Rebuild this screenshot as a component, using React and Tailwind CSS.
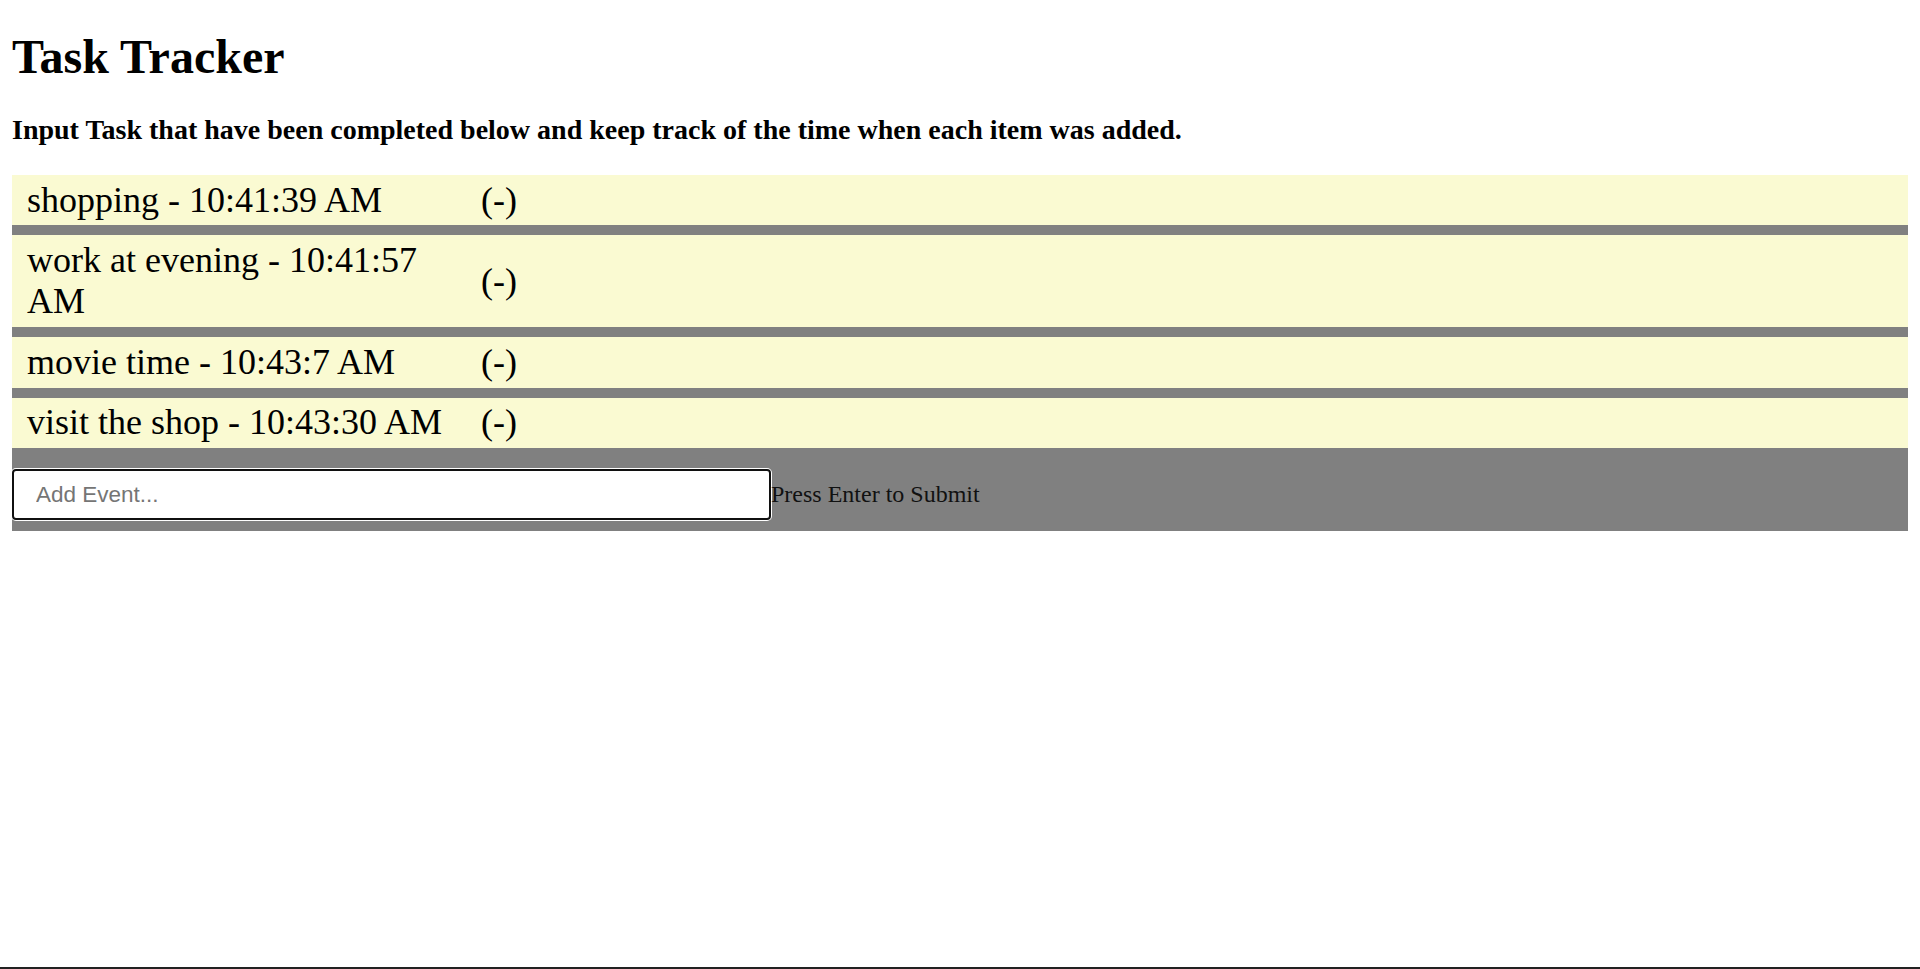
import { useState } from 'react';

const initialTasks = [
  { id: 1, text: 'shopping', time: '10:41:39 AM' },
  { id: 2, text: 'work at evening', time: '10:41:57 AM' },
  { id: 3, text: 'movie time', time: '10:43:7 AM' },
  { id: 4, text: 'visit the shop', time: '10:43:30 AM' },
];

const formatTime = (d) => {
  let h = d.getHours();
  const ampm = h >= 12 ? 'PM' : 'AM';
  h = h % 12 || 12;
  return `${h}:${d.getMinutes()}:${d.getSeconds()} ${ampm}`;
};

const App = () => {
  const [tasks, setTasks] = useState(initialTasks);
  const [value, setValue] = useState('');

  const handleSubmit = (e) => {
    e.preventDefault();
    if (!value.trim()) return;
    setTasks([...tasks, { id: Date.now(), text: value, time: formatTime(new Date()) }]);
    setValue('');
  };

  const removeTask = (id) => setTasks(tasks.filter(t => t.id !== id));

  return (
    <div className="h-screen border-b-2 border-[#222] px-3 bg-white text-black font-['Liberation_Serif','Times_New_Roman',serif] overflow-hidden">
      <h1 className="pt-[29px] text-[48px] leading-[55px] font-bold">Task Tracker</h1>
      <h3 className="mt-[30px] text-[28px] leading-[32px] font-bold">
        Input Task that have been completed below and keep track of the time when each item was added.
      </h3>

      <div className="mt-[29px] bg-[#808080]">
        <ul>
          {tasks.map(task => (
            <li key={task.id} className="mb-[10px] last:mb-0 flex items-center bg-[#fafad2] pl-[15px] py-[4.5px] text-[36px] leading-[41.4px]">
              <span className="w-[454px]">{task.text} - {task.time}</span>
              <span className="cursor-pointer" onClick={() => removeTask(task.id)}>(-)</span>
            </li>
          ))}
        </ul>
        <form onSubmit={handleSubmit} className="flex items-center pt-[21px] pb-[11px]">
          <input
            type="text"
            value={value}
            onChange={e => setValue(e.target.value)}
            placeholder="Add Event..."
            className="w-[759px] h-[51px] bg-white border-2 border-[#101010] rounded-[4px] shadow-[0_0_0_1px_#fff] pl-[22px] text-[22.5px] font-['Liberation_Sans',Arial,sans-serif] placeholder:text-[#757575] outline-none"
          />
          <span className="text-[24px] leading-[27.6px] text-[#111]">Press Enter to Submit</span>
        </form>
      </div>
    </div>
  );
};

export default App;
